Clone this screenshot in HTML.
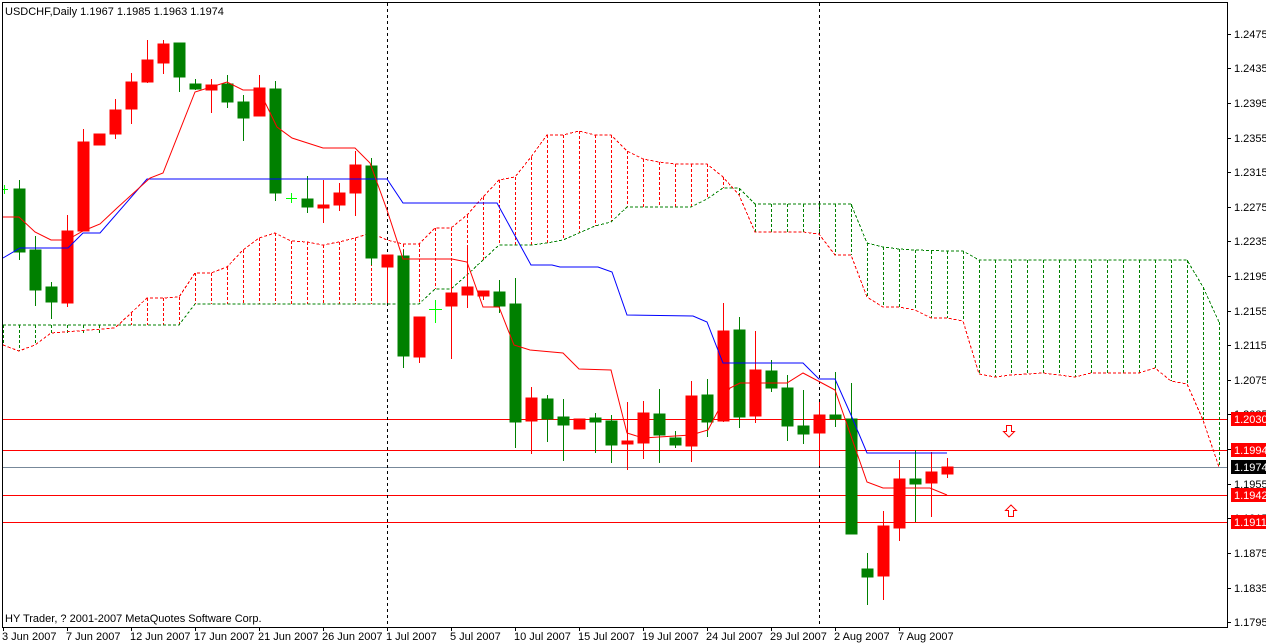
<!DOCTYPE html>
<html><head><meta charset="utf-8"><style>
html,body{margin:0;padding:0;background:#fff;}
svg{display:block;font-family:"Liberation Sans","DejaVu Sans",sans-serif;font-size:11px;}
</style></head><body>
<svg width="1266" height="644" viewBox="0 0 1266 644" xmlns="http://www.w3.org/2000/svg">
<rect width="1266" height="644" fill="#fff"/>
<g stroke-width="1" shape-rendering="crispEdges">
<line x1="3" y1="419.5" x2="1227" y2="419.5" stroke="#f00"/>
<line x1="3" y1="450.5" x2="1227" y2="450.5" stroke="#f00"/>
<line x1="3" y1="467.5" x2="1227" y2="467.5" stroke="#778899"/>
<line x1="3" y1="495.5" x2="1227" y2="495.5" stroke="#f00"/>
<line x1="3" y1="522.5" x2="1227" y2="522.5" stroke="#f00"/>
</g>
<g stroke="#000" stroke-dasharray="3,3" shape-rendering="crispEdges">
<line x1="387.5" y1="3" x2="387.5" y2="627"/>
<line x1="819.5" y1="3" x2="819.5" y2="627"/>
</g>
<g stroke-dasharray="3,2" fill="none" stroke-width="1" shape-rendering="crispEdges">
<g stroke="#008000">
<line x1="3.5" y1="325" x2="3.5" y2="345"/><line x1="19.5" y1="325" x2="19.5" y2="351"/><line x1="35.5" y1="325" x2="35.5" y2="345"/><line x1="51.5" y1="325" x2="51.5" y2="333"/><line x1="67.5" y1="325" x2="67.5" y2="333"/><line x1="83.5" y1="325" x2="83.5" y2="333"/><line x1="99.5" y1="325" x2="99.5" y2="333"/>
<line x1="739.5" y1="188" x2="739.5" y2="195"/><line x1="755.5" y1="204" x2="755.5" y2="232"/><line x1="771.5" y1="204" x2="771.5" y2="232"/><line x1="787.5" y1="204" x2="787.5" y2="232"/><line x1="803.5" y1="204" x2="803.5" y2="232"/><line x1="819.5" y1="204" x2="819.5" y2="234"/><line x1="835.5" y1="204" x2="835.5" y2="255"/><line x1="851.5" y1="204" x2="851.5" y2="255"/>
<line x1="867.5" y1="243" x2="867.5" y2="297"/><line x1="883.5" y1="247" x2="883.5" y2="307"/><line x1="899.5" y1="249" x2="899.5" y2="307"/><line x1="915.5" y1="250" x2="915.5" y2="310"/><line x1="931.5" y1="251" x2="931.5" y2="318"/><line x1="947.5" y1="251" x2="947.5" y2="318"/><line x1="963.5" y1="251" x2="963.5" y2="321"/>
<line x1="979.5" y1="260" x2="979.5" y2="374"/><line x1="995.5" y1="260" x2="995.5" y2="377"/><line x1="1011.5" y1="260" x2="1011.5" y2="375"/><line x1="1027.5" y1="260" x2="1027.5" y2="374"/><line x1="1043.5" y1="260" x2="1043.5" y2="373"/><line x1="1059.5" y1="260" x2="1059.5" y2="375"/><line x1="1075.5" y1="260" x2="1075.5" y2="377"/><line x1="1091.5" y1="260" x2="1091.5" y2="373"/><line x1="1107.5" y1="260" x2="1107.5" y2="373"/><line x1="1123.5" y1="260" x2="1123.5" y2="373"/><line x1="1139.5" y1="260" x2="1139.5" y2="373"/><line x1="1155.5" y1="260" x2="1155.5" y2="368"/><line x1="1171.5" y1="260" x2="1171.5" y2="381"/><line x1="1187.5" y1="260" x2="1187.5" y2="384"/><line x1="1203.5" y1="287" x2="1203.5" y2="420"/><line x1="1219.5" y1="322" x2="1219.5" y2="467"/>
</g>
<g stroke="#f00">
<line x1="131.5" y1="313" x2="131.5" y2="325"/><line x1="147.5" y1="298" x2="147.5" y2="325"/><line x1="163.5" y1="298" x2="163.5" y2="325"/><line x1="179.5" y1="297" x2="179.5" y2="325"/><line x1="195.5" y1="273" x2="195.5" y2="304"/><line x1="211.5" y1="273" x2="211.5" y2="304"/><line x1="227.5" y1="267" x2="227.5" y2="304"/><line x1="243.5" y1="250" x2="243.5" y2="304"/><line x1="259.5" y1="238" x2="259.5" y2="304"/><line x1="275.5" y1="233" x2="275.5" y2="304"/><line x1="291.5" y1="241" x2="291.5" y2="304"/><line x1="307.5" y1="242" x2="307.5" y2="304"/><line x1="323.5" y1="245" x2="323.5" y2="304"/><line x1="339.5" y1="242" x2="339.5" y2="304"/><line x1="355.5" y1="238" x2="355.5" y2="304"/><line x1="371.5" y1="233" x2="371.5" y2="304"/><line x1="403.5" y1="244" x2="403.5" y2="304"/><line x1="419.5" y1="244" x2="419.5" y2="304"/><line x1="435.5" y1="228" x2="435.5" y2="289"/><line x1="451.5" y1="228" x2="451.5" y2="289"/><line x1="467.5" y1="215" x2="467.5" y2="275"/><line x1="483.5" y1="197" x2="483.5" y2="260"/><line x1="499.5" y1="180" x2="499.5" y2="245"/><line x1="515.5" y1="177" x2="515.5" y2="245"/><line x1="531.5" y1="157" x2="531.5" y2="245"/><line x1="547.5" y1="135" x2="547.5" y2="243"/><line x1="563.5" y1="135" x2="563.5" y2="240"/><line x1="579.5" y1="131" x2="579.5" y2="233"/><line x1="595.5" y1="135" x2="595.5" y2="226"/><line x1="611.5" y1="135" x2="611.5" y2="222"/><line x1="627.5" y1="151" x2="627.5" y2="207"/><line x1="643.5" y1="159" x2="643.5" y2="207"/><line x1="659.5" y1="162" x2="659.5" y2="207"/><line x1="675.5" y1="164" x2="675.5" y2="207"/><line x1="691.5" y1="164" x2="691.5" y2="207"/><line x1="707.5" y1="164" x2="707.5" y2="199"/><line x1="723.5" y1="177" x2="723.5" y2="188"/>
</g>
<polyline stroke="#008000" points="3,325 179,325 195,304 419,304 435,289 451,289 467,275 483,260 499,245 531,245 547,243 563,240 579,233 595,226 611,222 627,207 691,207 707,199 723,188 739,188 755,204 851,204 867,243 883,247 899,249 915,250 947,251 963,251 979,260 1187,260 1203,287 1219,322"/>
<polyline stroke="#f00" points="3,345 19,351 35,345 51,333 115,328 131,313 147,298 163,298 179,297 195,273 211,273 227,267 243,250 259,238 275,233 291,241 307,242 323,245 339,242 355,238 371,233 387,240 403,244 419,244 435,228 451,228 467,215 483,197 499,180 515,177 531,157 547,135 563,135 579,131 595,135 611,135 627,151 643,159 659,162 675,164 707,164 723,177 739,195 755,232 803,232 819,234 835,255 851,255 867,297 883,307 899,307 915,310 931,318 947,318 963,321 979,374 995,377 1011,375 1043,373 1075,377 1091,373 1139,373 1155,368 1171,381 1187,384 1203,420 1219,467"/>
</g>
<g shape-rendering="crispEdges" stroke-width="1">
<g stroke="#008000" fill="#008000">
<line x1="19.5" y1="180" x2="19.5" y2="260"/><rect x="14" y="189" width="11" height="63"/>
<line x1="35.5" y1="236" x2="35.5" y2="306"/><rect x="30" y="250" width="11" height="40"/>
<line x1="51.5" y1="282" x2="51.5" y2="319"/><rect x="46" y="287" width="11" height="15"/>
<line x1="179.5" y1="43" x2="179.5" y2="92"/><rect x="174" y="43" width="11" height="34"/>
<line x1="195.5" y1="79" x2="195.5" y2="90"/><rect x="190" y="84" width="11" height="5"/>
<line x1="227.5" y1="75" x2="227.5" y2="108"/><rect x="222" y="84" width="11" height="18"/>
<line x1="243.5" y1="95" x2="243.5" y2="141"/><rect x="238" y="102" width="11" height="16"/>
<line x1="275.5" y1="81" x2="275.5" y2="201"/><rect x="270" y="89" width="11" height="104"/>
<line x1="307.5" y1="176" x2="307.5" y2="213"/><rect x="302" y="199" width="11" height="8"/>
<line x1="371.5" y1="158" x2="371.5" y2="265"/><rect x="366" y="166" width="11" height="92"/>
<line x1="403.5" y1="250" x2="403.5" y2="368"/><rect x="398" y="256" width="11" height="100"/>
<line x1="499.5" y1="280" x2="499.5" y2="313"/><rect x="494" y="292" width="11" height="14"/>
<line x1="515.5" y1="278" x2="515.5" y2="448"/><rect x="510" y="304" width="11" height="118"/>
<line x1="547.5" y1="395" x2="547.5" y2="442"/><rect x="542" y="399" width="11" height="20"/>
<line x1="563.5" y1="399" x2="563.5" y2="461"/><rect x="558" y="417" width="11" height="8"/>
<line x1="595.5" y1="413" x2="595.5" y2="453"/><rect x="590" y="418" width="11" height="4"/>
<line x1="611.5" y1="415" x2="611.5" y2="463"/><rect x="606" y="421" width="11" height="24"/>
<line x1="659.5" y1="389" x2="659.5" y2="463"/><rect x="654" y="414" width="11" height="21"/>
<line x1="675.5" y1="431" x2="675.5" y2="448"/><rect x="670" y="438" width="11" height="7"/>
<line x1="707.5" y1="379" x2="707.5" y2="437"/><rect x="702" y="395" width="11" height="27"/>
<line x1="739.5" y1="317" x2="739.5" y2="428"/><rect x="734" y="330" width="11" height="87"/>
<line x1="771.5" y1="360" x2="771.5" y2="392"/><rect x="766" y="371" width="11" height="17"/>
<line x1="787.5" y1="375" x2="787.5" y2="441"/><rect x="782" y="388" width="11" height="38"/>
<line x1="803.5" y1="390" x2="803.5" y2="444"/><rect x="798" y="426" width="11" height="8"/>
<line x1="835.5" y1="372" x2="835.5" y2="427"/><rect x="830" y="415" width="11" height="4"/>
<line x1="851.5" y1="383" x2="851.5" y2="534"/><rect x="846" y="419" width="11" height="115"/>
<line x1="867.5" y1="553" x2="867.5" y2="605"/><rect x="862" y="569" width="11" height="8"/>
<line x1="915.5" y1="450" x2="915.5" y2="522"/><rect x="910" y="479" width="11" height="5"/>
</g>
<g stroke="#f00" fill="#f00">
<line x1="67.5" y1="215" x2="67.5" y2="307"/><rect x="62" y="231" width="11" height="72"/>
<line x1="83.5" y1="129" x2="83.5" y2="231"/><rect x="78" y="142" width="11" height="89"/>
<rect x="94" y="134" width="11" height="11"/>
<line x1="115.5" y1="99" x2="115.5" y2="139"/><rect x="110" y="110" width="11" height="24"/>
<line x1="131.5" y1="73" x2="131.5" y2="124"/><rect x="126" y="82" width="11" height="27"/>
<line x1="147.5" y1="40" x2="147.5" y2="83"/><rect x="142" y="60" width="11" height="22"/>
<line x1="163.5" y1="40" x2="163.5" y2="74"/><rect x="158" y="44" width="11" height="19"/>
<line x1="211.5" y1="79" x2="211.5" y2="113"/><rect x="206" y="85" width="11" height="5"/>
<line x1="259.5" y1="75" x2="259.5" y2="116"/><rect x="254" y="88" width="11" height="28"/>
<line x1="323.5" y1="180" x2="323.5" y2="223"/><rect x="318" y="205" width="11" height="3"/>
<line x1="339.5" y1="183" x2="339.5" y2="211"/><rect x="334" y="193" width="11" height="12"/>
<line x1="355.5" y1="151" x2="355.5" y2="216"/><rect x="350" y="165" width="11" height="28"/>
<line x1="387.5" y1="255" x2="387.5" y2="303"/><rect x="382" y="255" width="11" height="12"/>
<line x1="419.5" y1="317" x2="419.5" y2="363"/><rect x="414" y="317" width="11" height="40"/>
<line x1="451.5" y1="271" x2="451.5" y2="359"/><rect x="446" y="293" width="11" height="13"/>
<line x1="467.5" y1="245" x2="467.5" y2="308"/><rect x="462" y="287" width="11" height="8"/>
<line x1="483.5" y1="291" x2="483.5" y2="300"/><rect x="478" y="291" width="11" height="5"/>
<line x1="531.5" y1="387" x2="531.5" y2="454"/><rect x="526" y="398" width="11" height="23"/>
<rect x="574" y="419" width="11" height="10"/>
<line x1="627.5" y1="402" x2="627.5" y2="470"/><rect x="622" y="441" width="11" height="3"/>
<line x1="643.5" y1="401" x2="643.5" y2="459"/><rect x="638" y="413" width="11" height="30"/>
<line x1="691.5" y1="381" x2="691.5" y2="462"/><rect x="686" y="396" width="11" height="50"/>
<line x1="723.5" y1="303" x2="723.5" y2="422"/><rect x="718" y="331" width="11" height="90"/>
<line x1="755.5" y1="331" x2="755.5" y2="423"/><rect x="750" y="370" width="11" height="46"/>
<line x1="819.5" y1="402" x2="819.5" y2="466"/><rect x="814" y="415" width="11" height="18"/>
<line x1="883.5" y1="511" x2="883.5" y2="600"/><rect x="878" y="526" width="11" height="50"/>
<line x1="899.5" y1="460" x2="899.5" y2="541"/><rect x="894" y="479" width="11" height="49"/>
<line x1="931.5" y1="452" x2="931.5" y2="517"/><rect x="926" y="472" width="11" height="11"/>
<line x1="947.5" y1="458" x2="947.5" y2="478"/><rect x="942" y="467" width="11" height="7"/>
</g>
<g stroke="#0f0">
<line x1="286" y1="198.5" x2="297" y2="198.5"/><line x1="291.5" y1="193" x2="291.5" y2="203"/>
<line x1="429" y1="309.5" x2="442" y2="309.5"/><line x1="435.5" y1="300" x2="435.5" y2="323"/>
<line x1="3" y1="189.5" x2="8" y2="189.5"/><line x1="4.5" y1="185" x2="4.5" y2="194"/>
</g>
</g>
<polyline fill="none" stroke="#00f" stroke-width="1" points="3,258 20,248 68,248 83,233 100,233 147,179 387,179 403,203 497,203 531,265 552,265 560,267 598,267 612,272 627,315 693,316 707,322 723,363 803,363 819,379 835,379 851,415 867,453 947,453"/>
<polyline fill="none" stroke="#f00" stroke-width="1" points="3,217 19,217 35,232 51,240 67,240 83,231 100,224 117,208 150,178 163,173 195,92 227,82 243,90 259,90 277,127 292,138 323,148 355,148 370,163 387,210 403,259 452,259 467,262 483,307 499,307 514,345 530,350 563,353 579,369 611,370 627,433 643,438 691,435 708,430 730,388 740,383 787,383 803,373 820,382 835,390 867,482 883,488 930,488 947,495"/>
<path d="M1006.5,425.5 h5 v6 h3 l-5.5,5.5 l-5.5,-5.5 h3 z" fill="#fff" stroke="#f00"/>
<path d="M1008.5,516.5 h5 v-6 h3 l-5.5,-5.5 l-5.5,5.5 h3 z" fill="#fff" stroke="#f00"/>
<rect x="2.5" y="2.5" width="1225" height="625" fill="none" stroke="#000" shape-rendering="crispEdges"/>
<g stroke="#000" shape-rendering="crispEdges">
<line x1="1227" y1="34.5" x2="1231" y2="34.5"/><line x1="1227" y1="68.5" x2="1231" y2="68.5"/><line x1="1227" y1="103.5" x2="1231" y2="103.5"/><line x1="1227" y1="138.5" x2="1231" y2="138.5"/><line x1="1227" y1="172.5" x2="1231" y2="172.5"/><line x1="1227" y1="207.5" x2="1231" y2="207.5"/><line x1="1227" y1="241.5" x2="1231" y2="241.5"/><line x1="1227" y1="276.5" x2="1231" y2="276.5"/><line x1="1227" y1="311.5" x2="1231" y2="311.5"/><line x1="1227" y1="345.5" x2="1231" y2="345.5"/><line x1="1227" y1="380.5" x2="1231" y2="380.5"/><line x1="1227" y1="414.5" x2="1231" y2="414.5"/><line x1="1227" y1="449.5" x2="1231" y2="449.5"/><line x1="1227" y1="484.5" x2="1231" y2="484.5"/><line x1="1227" y1="518.5" x2="1231" y2="518.5"/><line x1="1227" y1="553.5" x2="1231" y2="553.5"/><line x1="1227" y1="588.5" x2="1231" y2="588.5"/><line x1="1227" y1="622.5" x2="1231" y2="622.5"/>
</g>
<g fill="#000">
<text x="1234" y="38">1.2475</text><text x="1234" y="72">1.2435</text><text x="1234" y="107">1.2395</text><text x="1234" y="142">1.2355</text><text x="1234" y="176">1.2315</text><text x="1234" y="211">1.2275</text><text x="1234" y="245">1.2235</text><text x="1234" y="280">1.2195</text><text x="1234" y="315">1.2155</text><text x="1234" y="349">1.2115</text><text x="1234" y="384">1.2075</text><text x="1234" y="418">1.2035</text><text x="1234" y="488">1.1955</text><text x="1234" y="522">1.1915</text><text x="1234" y="557">1.1875</text><text x="1234" y="592">1.1835</text><text x="1234" y="626">1.1795</text>
</g>
<g shape-rendering="crispEdges">
<rect x="1231" y="412" width="35" height="14" fill="#f00"/>
<rect x="1231" y="443" width="35" height="14" fill="#f00"/>
<rect x="1231" y="460" width="35" height="14" fill="#000"/>
<rect x="1231" y="488" width="35" height="14" fill="#f00"/>
<rect x="1231" y="515" width="35" height="14" fill="#f00"/>
</g>
<g fill="#fff">
<text x="1234" y="423">1.2030</text><text x="1234" y="454">1.1994</text><text x="1234" y="471">1.1974</text><text x="1234" y="499">1.1942</text><text x="1234" y="526">1.1911</text>
</g>
<g stroke="#000" shape-rendering="crispEdges">
<line x1="3.5" y1="627" x2="3.5" y2="631"/><line x1="67.5" y1="627" x2="67.5" y2="631"/><line x1="131.5" y1="627" x2="131.5" y2="631"/><line x1="195.5" y1="627" x2="195.5" y2="631"/><line x1="259.5" y1="627" x2="259.5" y2="631"/><line x1="323.5" y1="627" x2="323.5" y2="631"/><line x1="387.5" y1="627" x2="387.5" y2="631"/><line x1="451.5" y1="627" x2="451.5" y2="631"/><line x1="515.5" y1="627" x2="515.5" y2="631"/><line x1="579.5" y1="627" x2="579.5" y2="631"/><line x1="643.5" y1="627" x2="643.5" y2="631"/><line x1="707.5" y1="627" x2="707.5" y2="631"/><line x1="771.5" y1="627" x2="771.5" y2="631"/><line x1="835.5" y1="627" x2="835.5" y2="631"/><line x1="899.5" y1="627" x2="899.5" y2="631"/>
</g>
<g fill="#000">
<text x="2" y="640">3 Jun 2007</text><text x="66" y="640">7 Jun 2007</text><text x="130" y="640">12 Jun 2007</text><text x="194" y="640">17 Jun 2007</text><text x="258" y="640">21 Jun 2007</text><text x="322" y="640">26 Jun 2007</text><text x="386" y="640">1 Jul 2007</text><text x="450" y="640">5 Jul 2007</text><text x="514" y="640">10 Jul 2007</text><text x="578" y="640">15 Jul 2007</text><text x="642" y="640">19 Jul 2007</text><text x="706" y="640">24 Jul 2007</text><text x="770" y="640">29 Jul 2007</text><text x="834" y="640">2 Aug 2007</text><text x="898" y="640">7 Aug 2007</text>
<text x="5" y="15">USDCHF,Daily  1.1967 1.1985 1.1963 1.1974</text>
<text x="5" y="622">HY Trader, ? 2001-2007 MetaQuotes Software Corp.</text>
</g>
</svg>
</body></html>
